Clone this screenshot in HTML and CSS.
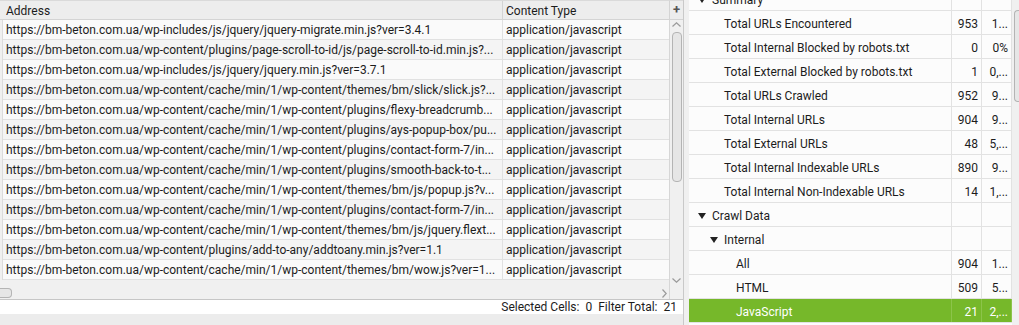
FILE: index.html
```html
<!DOCTYPE html>
<html lang="en">
<head>
    <meta charset="UTF-8">
    <title>Crawl Overview</title>
    <link rel="stylesheet" href="styles.css">
</head>
<body>
    <div class="app">
        <div class="left">
            <div class="grid">
                <div class="head">
                    <div class="hcell addr">Address</div>
                    <div class="hcell ctype">Content Type</div>
                </div>
                <div class="plus">+</div>
                <div class="rows">
                    <div class="row"><div class="c-addr">https://bm-beton.com.ua/wp-includes/js/jquery/jquery-migrate.min.js?ver=3.4.1</div><div class="c-type">application/javascript</div></div>
                    <div class="row"><div class="c-addr">https://bm-beton.com.ua/wp-content/plugins/page-scroll-to-id/js/page-scroll-to-id.min.js?...</div><div class="c-type">application/javascript</div></div>
                    <div class="row"><div class="c-addr">https://bm-beton.com.ua/wp-includes/js/jquery/jquery.min.js?ver=3.7.1</div><div class="c-type">application/javascript</div></div>
                    <div class="row"><div class="c-addr">https://bm-beton.com.ua/wp-content/cache/min/1/wp-content/themes/bm/slick/slick.js?...</div><div class="c-type">application/javascript</div></div>
                    <div class="row"><div class="c-addr">https://bm-beton.com.ua/wp-content/cache/min/1/wp-content/plugins/flexy-breadcrumb...</div><div class="c-type">application/javascript</div></div>
                    <div class="row"><div class="c-addr">https://bm-beton.com.ua/wp-content/cache/min/1/wp-content/plugins/ays-popup-box/pu...</div><div class="c-type">application/javascript</div></div>
                    <div class="row"><div class="c-addr">https://bm-beton.com.ua/wp-content/cache/min/1/wp-content/plugins/contact-form-7/in...</div><div class="c-type">application/javascript</div></div>
                    <div class="row"><div class="c-addr">https://bm-beton.com.ua/wp-content/cache/min/1/wp-content/plugins/smooth-back-to-t...</div><div class="c-type">application/javascript</div></div>
                    <div class="row"><div class="c-addr">https://bm-beton.com.ua/wp-content/cache/min/1/wp-content/themes/bm/js/popup.js?v...</div><div class="c-type">application/javascript</div></div>
                    <div class="row"><div class="c-addr">https://bm-beton.com.ua/wp-content/cache/min/1/wp-content/plugins/contact-form-7/in...</div><div class="c-type">application/javascript</div></div>
                    <div class="row"><div class="c-addr">https://bm-beton.com.ua/wp-content/cache/min/1/wp-content/themes/bm/js/jquery.flext...</div><div class="c-type">application/javascript</div></div>
                    <div class="row"><div class="c-addr">https://bm-beton.com.ua/wp-content/plugins/add-to-any/addtoany.min.js?ver=1.1</div><div class="c-type">application/javascript</div></div>
                    <div class="row"><div class="c-addr">https://bm-beton.com.ua/wp-content/cache/min/1/wp-content/themes/bm/wow.js?ver=1...</div><div class="c-type">application/javascript</div></div>
                </div>
                <div class="vscroll">
                    <svg class="chev-up" width="9" height="5" viewBox="0 0 9 5"><path d="M0.5 4.5 L4.5 0.8 L8.5 4.5" fill="none" stroke="#9a9a9a" stroke-width="1.2"/></svg>
                    <div class="vthumb"></div>
                    <div class="spacer"></div>
                    <svg class="chev-down" width="9" height="5" viewBox="0 0 9 5"><path d="M0.5 0.5 L4.5 4.2 L8.5 0.5" fill="none" stroke="#9a9a9a" stroke-width="1.2"/></svg>
                </div>
                <div class="hscroll">
                    <div class="hthumb"></div>
                    <div class="spacer"></div>
                    <svg class="chev-right" width="5" height="9" viewBox="0 0 5 9"><path d="M0.5 0.5 L4.2 4.5 L0.5 8.5" fill="none" stroke="#9a9a9a" stroke-width="1.2"/></svg>
                </div>
            </div>
            <div class="status">
                <span>Selected Cells:</span><span class="val">0</span>
                <span class="grp">Filter Total:</span><span class="val">21</span>
            </div>
            <div class="foot"></div>
        </div>
        <div class="splitter"></div>
        <div class="right">
            <div class="tree">
                <div class="trow"><div class="name lv0"><span class="arrow"></span>Summary</div><div class="num"></div><div class="pct"></div></div>
                <div class="trow"><div class="name leaf1">Total URLs Encountered</div><div class="num">953</div><div class="pct">1...</div></div>
                <div class="trow"><div class="name leaf1">Total Internal Blocked by robots.txt</div><div class="num">0</div><div class="pct">0%</div></div>
                <div class="trow"><div class="name leaf1">Total External Blocked by robots.txt</div><div class="num">1</div><div class="pct">0,...</div></div>
                <div class="trow"><div class="name leaf1">Total URLs Crawled</div><div class="num">952</div><div class="pct">9...</div></div>
                <div class="trow"><div class="name leaf1">Total Internal URLs</div><div class="num">904</div><div class="pct">9...</div></div>
                <div class="trow"><div class="name leaf1">Total External URLs</div><div class="num">48</div><div class="pct">5,...</div></div>
                <div class="trow"><div class="name leaf1">Total Internal Indexable URLs</div><div class="num">890</div><div class="pct">9...</div></div>
                <div class="trow"><div class="name leaf1">Total Internal Non-Indexable URLs</div><div class="num">14</div><div class="pct">1,...</div></div>
                <div class="trow"><div class="name lv0"><span class="arrow"></span>Crawl Data</div><div class="num"></div><div class="pct"></div></div>
                <div class="trow"><div class="name lv1"><span class="arrow"></span>Internal</div><div class="num"></div><div class="pct"></div></div>
                <div class="trow"><div class="name leaf2">All</div><div class="num">904</div><div class="pct">1...</div></div>
                <div class="trow"><div class="name leaf2">HTML</div><div class="num">509</div><div class="pct">5...</div></div>
                <div class="trow selected"><div class="name leaf2">JavaScript</div><div class="num">21</div><div class="pct">2,...</div></div>
            </div>
            <div class="rscroll">
                <div class="rthumb"></div>
            </div>
        </div>
    </div>
</body>
</html>
```

FILE: styles.css
```css
body {
    margin: 0;
    font-family: Roboto, "Liberation Sans", sans-serif;
    font-size: 12px;
    color: #1c1c1c;
    background-color: #ececec;
    overflow: hidden;
}

.app {
    display: flex;
    width: 1019px;
    height: 325px;
}

/* left table */
.left {
    width: 684px;
    flex: none;
    display: flex;
    flex-direction: column;
    border-right: 1px solid #c9c9c9;
    box-sizing: border-box;
}

.grid {
    display: grid;
    grid-template-columns: 669px 14px;
    grid-template-rows: 20px 260px 19px;
    border-bottom: 1px solid #c6c6c6;
    background-color: #f0f0f0;
}

.head {
    display: flex;
    background-color: #ededed;
    border-top: 1px solid #dadada;
    border-bottom: 1px solid #d4d4d4;
    box-sizing: border-box;
}

.hcell {
    padding-top: 2px;
    line-height: 16px;
    white-space: nowrap;
}

.hcell.addr {
    width: 503px;
    padding-left: 6px;
    border-right: 1px solid #d4d4d4;
    box-sizing: border-box;
}

.hcell.ctype {
    flex: 1;
    padding-left: 3px;
}

.plus {
    background-color: #ededed;
    border-top: 1px solid #dadada;
    border-bottom: 1px solid #d4d4d4;
    border-left: 1px solid #d4d4d4;
    box-sizing: border-box;
    text-align: center;
    font-weight: bold;
    font-size: 13px;
    line-height: 17px;
    color: #555;
}

.rows {
    background-color: #fafafa;
    overflow: hidden;
    margin-left: 2px;
    border-left: 1px solid #dcdcdc;
}

.row {
    display: flex;
    height: 20px;
    border-bottom: 1px solid #e1e1e1;
    box-sizing: border-box;
    white-space: nowrap;
}

.row:nth-child(even) {
    background-color: #f4f4f4;
}

.c-addr, .c-type {
    padding-top: 2px;
    line-height: 17px;
    overflow: hidden;
}

.c-addr {
    width: 500px;
    padding-left: 3px;
    border-right: 1px solid #e1e1e1;
    box-sizing: border-box;
}

.c-type {
    flex: 1;
    padding-left: 3px;
}

.vscroll {
    grid-column: 2;
    grid-row: 2 / 4;
    display: flex;
    flex-direction: column;
    align-items: center;
    border-left: 1px solid #d6d6d6;
    background-color: #f0f0f0;
}

.chev-up {
    margin-top: 2px;
}

.vthumb {
    margin-top: 5px;
    width: 8px;
    height: 148px;
    border: 1px solid #b4b4b4;
    border-radius: 4px;
    background-color: #e6e6e6;
}

.spacer {
    flex: 1;
}

.chev-down {
    margin-bottom: 16px;
}

.hscroll {
    display: flex;
    align-items: flex-start;
}

.hthumb {
    margin-top: 8px;
    width: 11px;
    height: 8px;
    border: 1px solid #b4b4b4;
    border-left: none;
    border-radius: 0 4px 4px 0;
    background-color: #e6e6e6;
}

.chev-right {
    margin-top: 9px;
    margin-right: 2px;
}

.status {
    height: 14px;
    padding-top: 1px;
    line-height: 13px;
    box-sizing: border-box;
    background-color: #fff;
    display: flex;
    justify-content: flex-end;
    padding-right: 6px;
    white-space: nowrap;
}

.status .val {
    margin-left: 6px;
}

.status .grp {
    margin-left: 6px;
}

.foot {
    flex: 1;
    background-color: #ececec;
}

.splitter {
    width: 5px;
    flex: none;
    background-color: #f0f0f0;
}

/* right tree */
.right {
    flex: 1;
    display: flex;
    overflow: hidden;
    background-color: #fcfcfc;
}

.tree {
    width: 323px;
    flex: none;
    margin-top: -13px;
}

.trow {
    display: flex;
    height: 24px;
    border-bottom: 1px solid #e2e2e2;
    box-sizing: border-box;
    background-color: #fcfcfc;
    white-space: nowrap;
}

.name, .num, .pct {
    padding-top: 4px;
    line-height: 19px;
    box-sizing: border-box;
    overflow: hidden;
}

.name {
    width: 263px;
    border-right: 1px solid #e2e2e2;
    display: flex;
    align-items: center;
}

.num, .pct {
    width: 30px;
    padding-right: 3px;
    border-right: 1px solid #e2e2e2;
    text-align: right;
}

.lv0 { padding-left: 9px; }
.lv1 { padding-left: 21px; }
.leaf1 { padding-left: 35px; }
.leaf2 { padding-left: 47px; }

.arrow {
    width: 14px;
    height: 6px;
    flex: none;
    margin-top: -1px;
}

.arrow::before {
    content: "";
    display: block;
    width: 0;
    height: 0;
    border-left: 4px solid transparent;
    border-right: 4px solid transparent;
    border-top: 6px solid #222;
}

.trow.selected {
    background-color: #76b82a;
    color: #fff;
}

.trow.selected .name,
.trow.selected .num,
.trow.selected .pct {
    border-right-color: #8cc44a;
}

.rscroll {
    flex: 1;
    background-color: #f0f0f0;
}

.rthumb {
    margin-top: 10px;
    margin-left: 2px;
    height: 90px;
    border: 1px solid #b4b4b4;
    border-right: none;
    border-radius: 4px 0 0 4px;
    background-color: #e6e6e6;
}
```
